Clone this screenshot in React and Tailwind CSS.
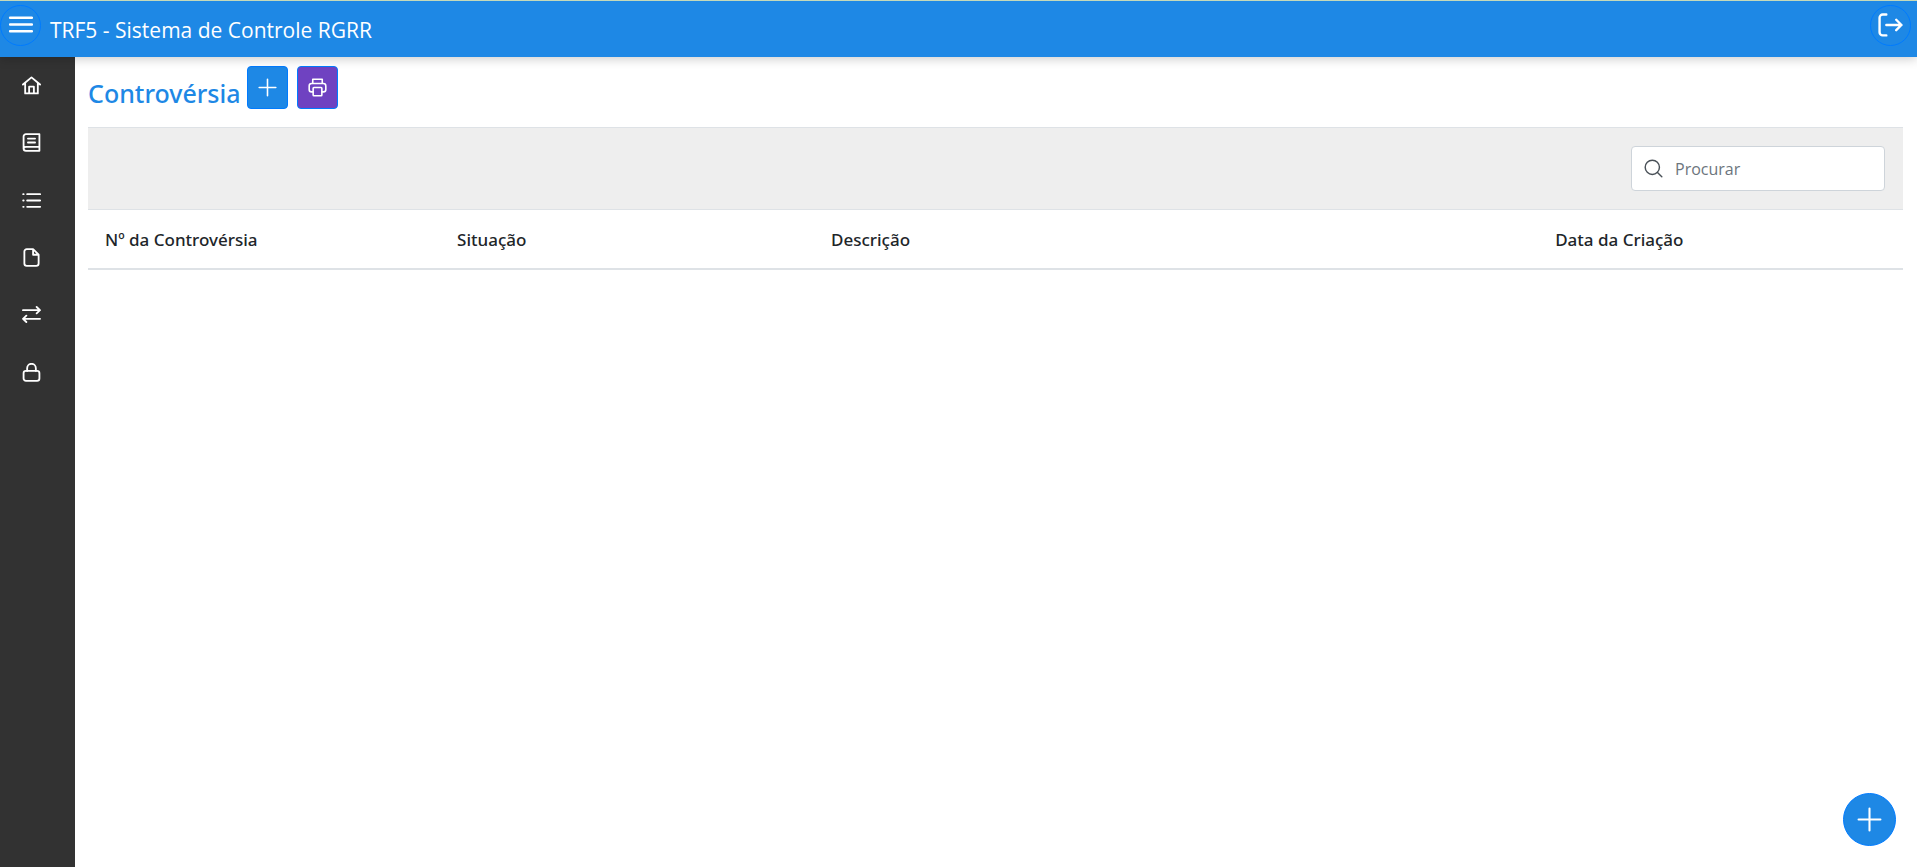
import React, { useState } from 'react'

const Icon = ({ children, className = 'w-[19px] h-[19px]', stroke = 2.3 }) => (
  <svg viewBox="0 0 24 24" fill="none" stroke="currentColor" strokeWidth={stroke}
    strokeLinecap="round" strokeLinejoin="round" className={className} aria-hidden="true">
    {children}
  </svg>
)

const menuItems = [
  { label: 'Início', icon: <path d="M1.2 10.8 12 1.8l10.8 9M4 9v13h16V9M9 22v-8.5h6V22" /> },
  { label: 'Temas', icon: <path d="M22 17.5v-16H5a3 3 0 0 0-3 3v15a3 3 0 0 0 3 3h17v-5H5a3 3 0 0 0-3 2.5M7.5 7h9M7.5 12h9" /> },
  { label: 'Listagem', icon: <path d="M6.5 4H23M6.5 12H23M6.5 20H23M1.5 4h.6M1.5 12h.6M1.5 20h.6" /> },
  { label: 'Documentos', icon: <path d="M14 1.5H6a3 3 0 0 0-3 3v15a3 3 0 0 0 3 3h12a3 3 0 0 0 3-3v-11zv7h7" /> },
  { label: 'Movimentações', icon: <path d="M1.2 6.5h21.5M18.5 2.5l4.2 4-4.2 4M22.8 17.5H1.2M5.5 13.5l-4.2 4 4.2 4" /> },
  { label: 'Acesso', icon: <><rect x="2" y="10" width="20" height="12.5" rx="3" /><path d="M6.5 10V6.5a5.5 5.5 0 0 1 11 0V10" /></> },
]

const columns = [
  { label: 'Nº da Controvérsia', width: 'w-[19.4%]' },
  { label: 'Situação', width: 'w-[20.6%]' },
  { label: 'Descrição', width: 'w-[39.9%]' },
  { label: 'Data da Criação', width: 'w-[20.1%]' },
]

const Topbar = () => (
  <header className="relative z-10 h-[57px] flex items-start justify-between pt-1 pr-[6px] bg-[#1e88e5] border-t border-[#c5d9b9] text-white shadow-[0_2px_10px_rgba(0,0,0,0.2)]">
    <div className="flex items-start gap-[9px]">
      <button type="button" aria-label="Menu"
        className="w-[41px] h-[41px] rounded-full border border-[#007bff] flex items-center justify-center">
        <Icon className="w-[25px] h-[25px]"><path d="M2 4.5h21M2 11h21M2 17.5h21" /></Icon>
      </button>
      <span className="text-[21px] leading-[50px]">TRF5 - Sistema de Controle RGRR</span>
    </div>
    <button type="button" aria-label="Sair"
      className="w-[41px] h-[41px] rounded-full border border-[#007bff] flex items-center justify-center">
      <Icon className="w-[25px] h-[25px]">
        <path d="M8 1.5H4.5a3 3 0 0 0-3 3v14a3 3 0 0 0 3 3H8M8 11.5h14.5M17.5 6.5l5 5-5 5" />
      </Icon>
    </button>
  </header>
)

const Sidebar = () => (
  <nav className="w-[75px] shrink-0 bg-[#323232] text-white">
    <ul className="grid grid-rows-6 h-[344px]">
      {menuItems.map(item => (
        <li key={item.label}>
          <a href="#" aria-label={item.label} className="h-full flex items-center pl-[22px]">
            <Icon>{item.icon}</Icon>
          </a>
        </li>
      ))}
    </ul>
  </nav>
)

export default function App() {
  const [search, setSearch] = useState('')

  return (
    <div className="min-h-screen flex flex-col bg-white text-[#212529] font-['Open_Sans','Noto_Sans',sans-serif]">
      <Topbar />
      <div className="flex-1 flex">
        <Sidebar />

        <main className="flex-1 min-w-0 pl-[13px] pr-[14px] pt-[9px]">
          <div className="flex items-start gap-[9px] mb-[18px]">
            <h1 className="w-[150px] text-[25px] leading-[54px] h-[43px] font-['Noto_Sans',sans-serif] font-medium text-[#1e88e5] whitespace-nowrap">Controvérsia</h1>
            <button type="button" aria-label="Adicionar"
              className="w-[41px] h-[43px] rounded border border-[#007bff] bg-[#1e88e5] text-white flex items-center justify-center">
              <Icon stroke={2}><path d="M12 1.5v21M1.5 12h21" /></Icon>
            </button>
            <button type="button" aria-label="Imprimir"
              className="w-[41px] h-[43px] rounded border border-[#007bff] bg-[#6f42c1] text-white flex items-center justify-center">
              <Icon stroke={2}>
                <path d="M6 7V1.5h12V7M6 17.5H4.5a3 3 0 0 1-3-3V10a3 3 0 0 1 3-3h15a3 3 0 0 1 3 3v4.5a3 3 0 0 1-3 3H18" />
                <rect x="6.5" y="12" width="11" height="10.5" rx="1" />
              </Icon>
            </button>
          </div>

          <div className="flex justify-end p-[18px] bg-[#eeeeee] border-y border-[#dee2e6]">
            <label className="w-[254px] h-[45px] flex items-center gap-3 px-3 bg-white border border-[#ced4da] rounded">
              <Icon className="w-[19px] h-[19px] text-[#495057]" stroke={1.8}>
                <circle cx="10.5" cy="10.5" r="9" /><path d="m17 17 5.5 5.5" />
              </Icon>
              <input type="text" placeholder="Procurar" aria-label="Procurar" value={search}
                onChange={e => setSearch(e.target.value)}
                className="flex-1 min-w-0 text-base outline-none placeholder:text-[#6c757d]" />
            </label>
          </div>

          <table className="w-full table-fixed border-collapse">
            <thead>
              <tr className="border-b-2 border-[#dee2e6]">
                {columns.map(col => (
                  <th key={col.label} scope="col"
                    className={`${col.width} h-[59px] px-[17px] pt-[2px] text-left text-[17px] leading-6 font-['Noto_Sans',sans-serif] font-medium`}>
                    {col.label}
                  </th>
                ))}
              </tr>
            </thead>
            <tbody />
          </table>
        </main>
      </div>

      <button type="button" aria-label="Nova controvérsia"
        className="fixed right-[21px] bottom-[21px] w-[53px] h-[53px] rounded-full border border-[#007bff] bg-[#1e88e5] text-white flex items-center justify-center">
        <Icon className="w-[25px] h-[25px]" stroke={2}><path d="M12 1.5v21M1.5 12h21" /></Icon>
      </button>
    </div>
  )
}
